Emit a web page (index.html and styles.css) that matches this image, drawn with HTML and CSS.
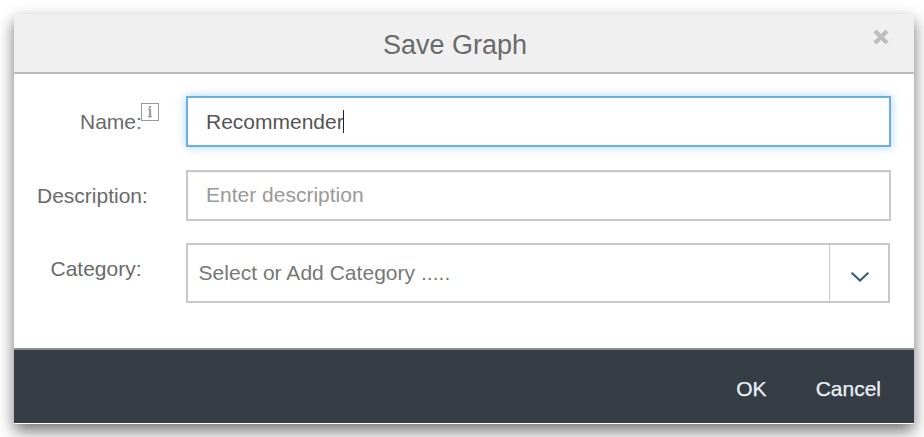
FILE: index.html
```html
<!DOCTYPE html>
<html lang="en">
<head>
<meta charset="utf-8">
<title>Save Graph</title>
<link rel="stylesheet" href="styles.css">
</head>
<body>
<section class="dialog" role="dialog" aria-labelledby="title">
  <header class="dialog-header">
    <h1 class="title" id="title">Save Graph</h1>
    <button class="close" type="button" aria-label="Close">
      <svg width="16" height="16" viewBox="0 0 16 16"><path d="M2 2 14 14M14 2 2 14"/></svg>
    </button>
  </header>
  <div class="dialog-body">
    <div class="label label-name"><span>Name:</span><span class="info">i</span></div>
    <div class="field field-active"><span>Recommender</span><span class="caret"></span></div>
    <div class="label label-description">Description:</div>
    <div class="field field-empty"><span>Enter description</span></div>
    <div class="label label-category">Category:</div>
    <div class="select">
      <span class="select-text">Select or Add Category .....</span>
      <span class="select-toggle">
        <svg width="20" height="12" viewBox="0 0 20 12"><path d="M1.6 1.8 10 9.6 18.4 1.8"/></svg>
      </span>
    </div>
  </div>
  <footer class="dialog-footer">
    <button class="action" type="button">OK</button>
    <button class="action" type="button">Cancel</button>
  </footer>
</section>
</body>
</html>
```
FILE: styles.css
```css
* {
  box-sizing: border-box;
}

body {
  margin: 0;
  padding: 14px 10px 0 14px;
  height: 437px;
  overflow: hidden;
  background: #fff;
  font-family: "Liberation Sans", Arial, sans-serif;
  font-size: 21px;
  line-height: 24px;
  color: #6a6a6a;
}

.dialog {
  display: flex;
  flex-direction: column;
  width: 900px;
  height: 410px;
  background: #fff;
  box-shadow: 0 7px 15px rgba(0, 0, 0, 0.55);
}

.dialog-header {
  display: grid;
  grid-template-columns: 40px 1fr 40px;
  height: 60px;
  padding: 0 13px 0 10px;
  background: #f0f0f0;
  border-bottom: 2px solid #bababa;
}

.title {
  grid-column: 2;
  margin: 0;
  padding-top: 1px;
  padding-right: 15px;
  font-size: 27px;
  font-weight: 400;
  line-height: 60px;
  text-align: center;
}

.close {
  display: flex;
  justify-content: center;
  align-items: flex-start;
  padding: 15px 0 0;
  background: none;
  border: 0;
}

.close path {
  fill: none;
  stroke: #bdbdbd;
  stroke-width: 4.2;
}

.dialog-body {
  display: grid;
  grid-template-columns: 172px 705px;
  grid-template-rows: 51px 51px 59px;
  row-gap: 23px;
  flex: 1;
  padding-top: 22px;
}

.label-name {
  display: flex;
  align-items: flex-start;
  padding: 14px 0 0 66px;
}

.label-description {
  padding: 14px 0 0 23px;
}

.label-category {
  padding: 13px 0 0 36.5px;
}

.info {
  width: 18px;
  height: 18px;
  margin-top: -7px;
  margin-left: -1px;
  border: 1px solid #999;
  font: 16px/16px "Liberation Serif", serif;
  -webkit-text-stroke: 0.4px #888;
  text-align: center;
  color: #888;
}

.field {
  display: flex;
  align-items: center;
  padding-left: 18px;
  border: 2px solid #c8c8c8;
}

.field-active {
  color: #555;
  border-color: #6caee0;
  box-shadow: 0 0 9px rgba(102, 175, 233, 0.55);
}

.field-empty {
  padding-bottom: 1px;
  color: #999;
  box-shadow: inset 0 1px 1px rgba(0, 0, 0, 0.06);
}

.caret {
  width: 1px;
  height: 23px;
  margin-left: -1px;
  background: #222;
}

.select {
  display: flex;
  width: 704px;
  margin-top: -1px;
  border: 2px solid #c8c8c8;
  color: #777;
}

.select-text {
  flex: 1;
  padding-left: 10.5px;
  line-height: 55px;
  letter-spacing: 0.03px;
}

.select-toggle {
  display: flex;
  justify-content: center;
  width: 59px;
  padding-top: 26px;
  padding-left: 1px;
  border-left: 1px solid #c8c8c8;
}

.select-toggle path {
  fill: none;
  stroke: #34617f;
  stroke-width: 2.2;
}

.dialog-footer {
  display: flex;
  justify-content: flex-end;
  align-items: center;
  gap: 49px;
  height: 75px;
  margin-bottom: 1px;
  padding: 5px 33px 0 0;
  background: #363d45;
  border-top: 2px solid #8b8e8e;
}

.action {
  padding: 0;
  border: 0;
  background: none;
  font: inherit;
  color: #eaf1f8;
  -webkit-text-stroke: 0.25px #eaf1f8;
}
```
